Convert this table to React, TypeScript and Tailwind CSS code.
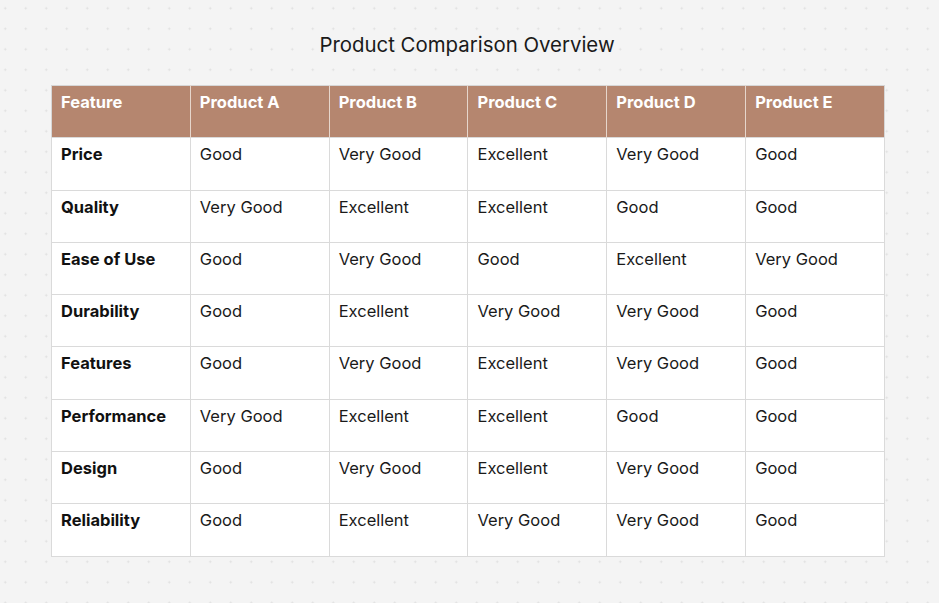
import React from "react";

const products = ["Product A", "Product B", "Product C", "Product D", "Product E"];

const rows: { feature: string; values: string[] }[] = [
  { feature: "Price", values: ["Good", "Very Good", "Excellent", "Very Good", "Good"] },
  { feature: "Quality", values: ["Very Good", "Excellent", "Excellent", "Good", "Good"] },
  { feature: "Ease of Use", values: ["Good", "Very Good", "Good", "Excellent", "Very Good"] },
  { feature: "Durability", values: ["Good", "Excellent", "Very Good", "Very Good", "Good"] },
  { feature: "Features", values: ["Good", "Very Good", "Excellent", "Very Good", "Good"] },
  { feature: "Performance", values: ["Very Good", "Excellent", "Excellent", "Good", "Good"] },
  { feature: "Design", values: ["Good", "Very Good", "Excellent", "Very Good", "Good"] },
  { feature: "Reliability", values: ["Good", "Excellent", "Very Good", "Very Good", "Good"] },
];

export default function App() {
  return (
    <div
      className="min-h-screen w-full bg-[#f4f4f4] bg-[radial-gradient(circle,#dedede_0.9px,transparent_1.1px)] bg-size-[20.5px_20.5px] bg-position-[-5px_-2px] flex flex-col items-center pt-[31px] pr-[3px] text-[#1a1a1a]"
      style={{ fontFamily: "Inter, 'Noto Sans', sans-serif" }}
    >
      <h1 className="mr-[2px] text-[20.4px] leading-7 font-normal text-[#1a1a1a]">
        Product Comparison Overview
      </h1>

      <table className="mt-[26px] w-[834px] table-fixed border-collapse border border-[#d6d6d6] bg-white">
        <thead>
          <tr className="bg-[#b5866f]">
            <th className="h-[52.3px] border-r border-[#e6d6cc] px-[9px] pt-1 align-top text-left text-[16.5px] leading-6 font-bold text-white">
              Feature
            </th>
            {products.map((p) => (
              <th
                key={p}
                className="h-[52.3px] border-r border-[#e6d6cc] px-[9px] pt-1 align-top text-left text-[16.5px] leading-6 font-bold text-white last:border-r-0"
              >
                {p}
              </th>
            ))}
          </tr>
        </thead>
        <tbody>
          {rows.map((row) => (
            <tr key={row.feature}>
              <td className="h-[52.3px] border border-[#dadada] px-[9px] pt-1 align-top text-[16.5px] leading-6 font-bold text-[#111]">
                {row.feature}
              </td>
              {row.values.map((v, i) => (
                <td
                  key={i}
                  className="h-[52.3px] border border-[#dadada] px-[9px] pt-1 align-top text-[16.5px] leading-6 text-[#1a1a1a]"
                >
                  {v}
                </td>
              ))}
            </tr>
          ))}
        </tbody>
      </table>
    </div>
  );
}
